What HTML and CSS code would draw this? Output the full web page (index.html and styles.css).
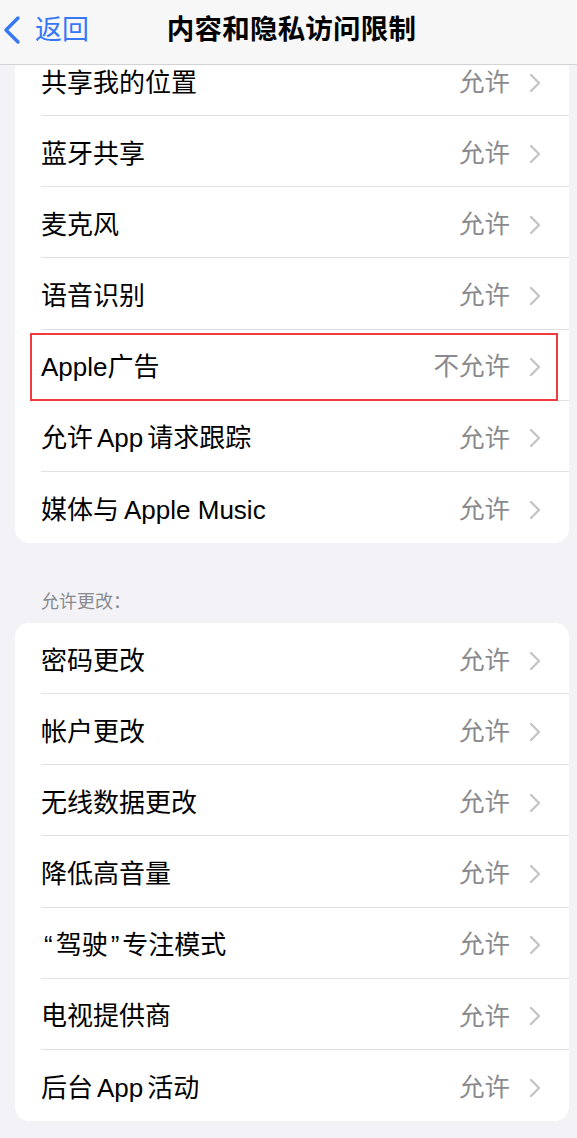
FILE: index.html
```html
<!DOCTYPE html>
<html lang="zh-CN">
<head>
<meta charset="utf-8">
<title>内容和隐私访问限制</title>
<link rel="stylesheet" href="styles.css">
</head>
<body>
<div class="screen">
  <header class="navbar">
    <a class="back">
      <svg class="back-chevron" width="18" height="30" viewBox="0 0 18 30">
        <path d="M15 3 L3 15 L15 27" fill="none" stroke="currentColor" stroke-width="3.4" stroke-linecap="round" stroke-linejoin="round"/>
      </svg>
      <span class="back-label">返回</span>
    </a>
    <h1 class="nav-title">内容和隐私访问限制</h1>
    <span class="nav-spacer"></span>
  </header>

  <main class="scroller">
    <div class="content">
      <section class="group">
        <div class="row"><div class="row-body"><span class="label">共享我的位置</span><span class="value">允许</span><svg class="chev" viewBox="0 0 12 20"><path d="M2 2 L10 10 L2 18"/></svg></div></div>
        <div class="row"><div class="row-body"><span class="label">蓝牙共享</span><span class="value">允许</span><svg class="chev" viewBox="0 0 12 20"><path d="M2 2 L10 10 L2 18"/></svg></div></div>
        <div class="row"><div class="row-body"><span class="label">麦克风</span><span class="value">允许</span><svg class="chev" viewBox="0 0 12 20"><path d="M2 2 L10 10 L2 18"/></svg></div></div>
        <div class="row"><div class="row-body"><span class="label">语音识别</span><span class="value">允许</span><svg class="chev" viewBox="0 0 12 20"><path d="M2 2 L10 10 L2 18"/></svg></div></div>
        <div class="row row-marked"><div class="row-body"><span class="label">Apple广告</span><span class="value">不允许</span><svg class="chev" viewBox="0 0 12 20"><path d="M2 2 L10 10 L2 18"/></svg></div><span class="mark"></span></div>
        <div class="row"><div class="row-body"><span class="label">允许<span class="latin">App</span>请求跟踪</span><span class="value">允许</span><svg class="chev" viewBox="0 0 12 20"><path d="M2 2 L10 10 L2 18"/></svg></div></div>
        <div class="row"><div class="row-body"><span class="label">媒体与<span class="latin lead">Apple Music</span></span><span class="value">允许</span><svg class="chev" viewBox="0 0 12 20"><path d="M2 2 L10 10 L2 18"/></svg></div></div>
      </section>

      <h2 class="group-header">允许更改：</h2>
      <section class="group">
        <div class="row"><div class="row-body"><span class="label">密码更改</span><span class="value">允许</span><svg class="chev" viewBox="0 0 12 20"><path d="M2 2 L10 10 L2 18"/></svg></div></div>
        <div class="row"><div class="row-body"><span class="label">帐户更改</span><span class="value">允许</span><svg class="chev" viewBox="0 0 12 20"><path d="M2 2 L10 10 L2 18"/></svg></div></div>
        <div class="row"><div class="row-body"><span class="label">无线数据更改</span><span class="value">允许</span><svg class="chev" viewBox="0 0 12 20"><path d="M2 2 L10 10 L2 18"/></svg></div></div>
        <div class="row"><div class="row-body"><span class="label">降低高音量</span><span class="value">允许</span><svg class="chev" viewBox="0 0 12 20"><path d="M2 2 L10 10 L2 18"/></svg></div></div>
        <div class="row"><div class="row-body"><span class="label"><span class="quote">“</span>驾驶<span class="quote">”</span>专注模式</span><span class="value">允许</span><svg class="chev" viewBox="0 0 12 20"><path d="M2 2 L10 10 L2 18"/></svg></div></div>
        <div class="row"><div class="row-body"><span class="label">电视提供商</span><span class="value">允许</span><svg class="chev" viewBox="0 0 12 20"><path d="M2 2 L10 10 L2 18"/></svg></div></div>
        <div class="row"><div class="row-body"><span class="label">后台<span class="latin">App</span>活动</span><span class="value">允许</span><svg class="chev" viewBox="0 0 12 20"><path d="M2 2 L10 10 L2 18"/></svg></div></div>
      </section>
    </div>
  </main>
</div>
</body>
</html>
```

FILE: styles.css
```css
* {
  box-sizing: border-box;
}

html, body {
  margin: 0;
  padding: 0;
  background: #f2f2f7;
}

body {
  font-family: "Liberation Sans", "Noto Sans CJK SC", sans-serif;
  color: #000;
}

.screen {
  width: 577px;
  height: 1138px;
  display: flex;
  flex-direction: column;
  overflow: hidden;
}

/* Navigation bar */
.navbar {
  flex: 0 0 65px;
  display: grid;
  grid-template-columns: 1fr auto 1fr;
  align-items: center;
  background: #f7f7f7;
  border-bottom: 1px solid #d3d3d5;
  padding-bottom: 4px;
  position: relative;
  z-index: 2;
}

.back {
  display: flex;
  align-items: center;
  gap: 14px;
  padding-left: 3px;
  color: #3478f6;
}

.back-chevron {
  display: block;
}

.back-label {
  font-size: 27px;
  line-height: 1;
}

.nav-title {
  margin: 0;
  font-size: 27.5px;
  font-weight: 700;
  line-height: 1;
  letter-spacing: 0.2px;
  padding-left: 6px;
}

/* Scrolled list */
.scroller {
  flex: 1;
  overflow: hidden;
}

.content {
  margin-top: -20px;
  padding: 0 8px 0 15px;
}

.group {
  background: #fff;
  border-radius: 14px;
  overflow: hidden;
}

.row {
  position: relative;
  height: 71.15px;
  padding-left: 26px;
}

.row-body {
  height: 100%;
  display: flex;
  align-items: center;
  border-bottom: 1px solid #e1e1e3;
  padding-top: 5px;
  padding-right: 28px;
}

.row:last-child .row-body {
  border-bottom: none;
}

.label {
  flex: 1;
  font-size: 26px;
  line-height: 1;
  white-space: nowrap;
}

/* Latin words set between CJK characters get a narrow gap */
.latin {
  margin: 0 4px;
}

.latin.lead {
  margin: 0 0 0 5px;
}

.quote {
  padding: 0 3px;
}

.value {
  font-size: 25.5px;
  line-height: 1;
  color: #8a8a8e;
  margin-right: 19px;
}

.chev {
  width: 12px;
  height: 20px;
  flex: 0 0 12px;
}

.chev path {
  fill: none;
  stroke: #c5c5c8;
  stroke-width: 2.4;
  stroke-linecap: round;
  stroke-linejoin: round;
}

/* Highlight frame drawn over the ad-tracking row */
.mark {
  position: absolute;
  left: 15px;
  right: 11px;
  top: 3px;
  bottom: 0;
  border: 2.5px solid #ef3b3d;
  pointer-events: none;
}

.group-header {
  margin: 47px 0 9px 26px;
  font-size: 18px;
  font-weight: 400;
  line-height: 24px;
  color: #8a8a8e;
}
```
